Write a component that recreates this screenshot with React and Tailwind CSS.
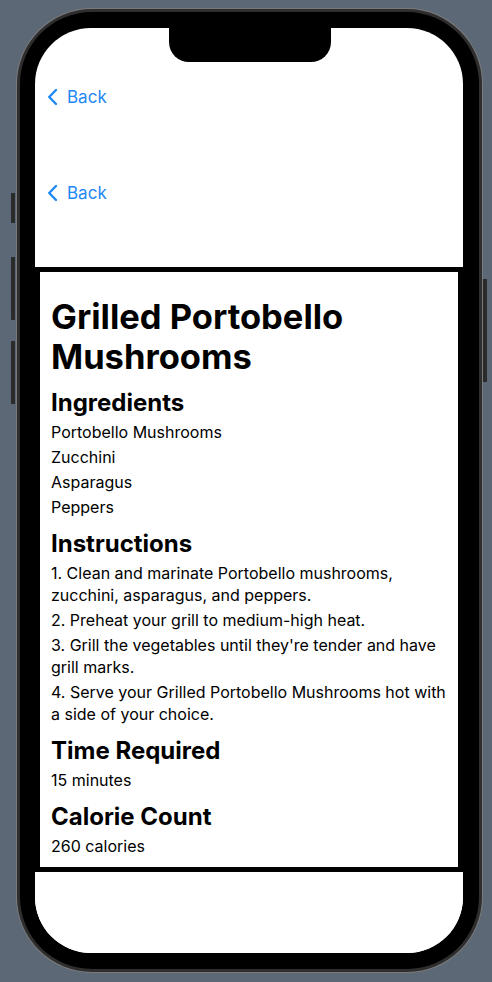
import React from "react";

const recipe = {
  title: "Grilled Portobello Mushrooms",
  ingredients: ["Portobello Mushrooms", "Zucchini", "Asparagus", "Peppers"],
  instructions: [
    "1. Clean and marinate Portobello mushrooms, zucchini, asparagus, and peppers.",
    "2. Preheat your grill to medium-high heat.",
    "3. Grill the vegetables until they're tender and have grill marks.",
    "4. Serve your Grilled Portobello Mushrooms hot with a side of your choice.",
  ],
  time: "15 minutes",
  calories: "260 calories",
};

const BackButton = () => (
  <div className="h-[44px] flex items-center pl-[12px] text-[#1e88f6]">
    <svg width="11" height="18" viewBox="0 0 11 18" fill="none">
      <path d="M9 2L2.2 9L9 16" stroke="currentColor" strokeWidth="2.4" strokeLinecap="round" strokeLinejoin="round" />
    </svg>
    <span className="ml-[9px] text-[17px] leading-none">Back</span>
  </div>
);

const Section = ({ title, items }) => (
  <div className="mt-[11px]">
    <h2 className="text-[24px] leading-[30px] font-bold mb-[3px]">{title}</h2>
    {items.map((item, i) => (
      <p key={i} className="text-[16px] leading-[22px] mb-[3px]">{item}</p>
    ))}
  </div>
);

export default function App() {
  return (
    <div className="w-[492px] h-[982px] bg-[#5d6877] flex items-start pt-[8px] font-['Inter',sans-serif] text-black">
      {/* left side buttons */}
      <div className="ml-[11px] mr-[1px] w-[4px] flex flex-col">
        <div className="mt-[185px] h-[30px] bg-[#2b2b2b] rounded-l-[1px]" />
        <div className="mt-[34px] h-[63px] bg-[#2b2b2b] rounded-l-[1px]" />
        <div className="mt-[21px] h-[63px] bg-[#2b2b2b] rounded-l-[1px]" />
      </div>

      {/* phone body */}
      <div className="w-[467px] h-[965px] rounded-[76px] bg-[#7a7a7a] p-[1px]">
        <div className="w-full h-full rounded-[75px] bg-[#2e2e2e] p-[3px]">
          <div className="w-full h-full rounded-[72px] bg-black pt-[16px] pb-[16px] pl-[15px] pr-[16px]">
            <div className="w-[428px] h-[925px] rounded-[56px] bg-white overflow-hidden flex flex-col">
              {/* notch */}
              <div className="h-[34px] flex justify-center pl-[1px]">
                <div className="w-[162px] h-[34px] bg-black rounded-b-[20px]" />
              </div>

              <div className="mt-[13px]">
                <BackButton />
              </div>
              <div className="mt-[52px]">
                <BackButton />
              </div>

              {/* recipe card */}
              <div className="mt-[52px] h-[605px] border-[5px] border-black bg-white px-[11px] pt-[25px]">
                <h1 className="text-[34.5px] leading-[40px] font-bold mb-[7px]">{recipe.title}</h1>
                <Section title="Ingredients" items={recipe.ingredients} />
                <Section title="Instructions" items={recipe.instructions} />
                <Section title="Time Required" items={[recipe.time]} />
                <Section title="Calorie Count" items={[recipe.calories]} />
              </div>

              <div className="flex-1 bg-white" />
            </div>
          </div>
        </div>
      </div>

      {/* right side button */}
      <div className="w-[4px] flex flex-col">
        <div className="mt-[271px] h-[103px] bg-[#2b2b2b]" />
      </div>
    </div>
  );
}
